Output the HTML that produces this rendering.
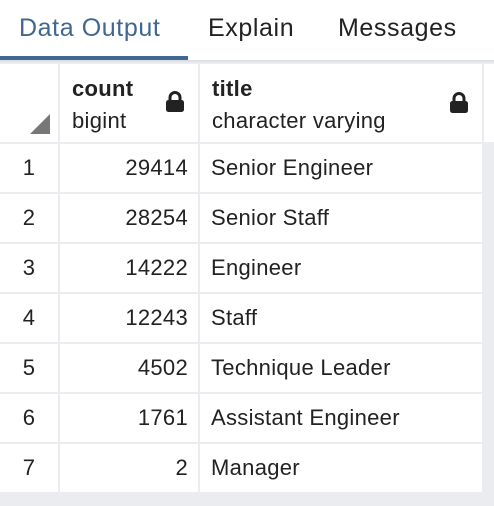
<!DOCTYPE html>
<html><head><style>
body{margin:0;width:494px;height:506px;background:#ebecef;font-family:"Liberation Sans",Arial,sans-serif;position:relative;overflow:hidden}
.tabs{position:absolute;left:0;top:0;width:494px;height:62px;background:#fff;border-bottom:2px solid #dde0e6;box-sizing:border-box}
.tab{position:absolute;top:14px;font-size:25px;letter-spacing:0.6px;color:#222}
.ul{position:absolute;left:0;top:56px;width:188px;height:4px;background:#3f6790}
.c{position:absolute;background:#fff;box-sizing:border-box;font-size:22px;letter-spacing:0.3px;color:#222}
.n{text-align:center}
.r{text-align:right;padding-right:10px}
.t{padding-left:11px}
.lock{position:absolute;width:20px;height:22px}
</style></head><body>
<div class="tabs">
<div class="tab" style="left:19px;color:#3f6790">Data Output</div>
<div class="tab" style="left:208px">Explain</div>
<div class="tab" style="left:338px">Messages</div>
<div class="ul"></div>
</div>
<div class="c" style="left:0;top:64px;width:58px;height:78px"><div style="position:absolute;left:30px;top:50px;width:0;height:0;border-left:20px solid transparent;border-bottom:20px solid #777"></div></div>
<div class="c" style="left:60px;top:64px;width:138px;height:78px"><div style="position:absolute;left:12px;top:12px;font-weight:bold">count</div><div style="position:absolute;left:12px;top:44px">bigint</div>
<svg class="lock" style="left:105px;top:27px" viewBox="0 0 20 22"><path d="M5 10V6.5a5 5 0 0 1 10 0V10" fill="none" stroke="#222" stroke-width="3"/><rect x="1" y="9" width="18" height="12" rx="2.5" fill="#222"/></svg></div>
<div class="c" style="left:200px;top:64px;width:282px;height:78px"><div style="position:absolute;left:12px;top:12px;font-weight:bold">title</div><div style="position:absolute;left:12px;top:44px">character varying</div>
<svg class="lock" style="left:249px;top:28px" viewBox="0 0 20 22"><path d="M5 10V6.5a5 5 0 0 1 10 0V10" fill="none" stroke="#222" stroke-width="3"/><rect x="1" y="9" width="18" height="12" rx="2.5" fill="#222"/></svg></div>
<div style="position:absolute;left:484px;top:64px;width:10px;height:78px;background:#fff"></div>
<div id="rows"></div>
<script>
var d=[["29414","Senior Engineer"],["28254","Senior Staff"],["14222","Engineer"],["12243","Staff"],["4502","Technique Leader"],["1761","Assistant Engineer"],["2","Manager"]];
var h="";
d.forEach(function(r,i){var y=144+i*50;
h+='<div class="c n" style="left:0;top:'+y+'px;width:58px;height:48px;line-height:48px">'+(i+1)+'</div>';
h+='<div class="c r" style="left:60px;top:'+y+'px;width:138px;height:48px;line-height:48px">'+r[0]+'</div>';
h+='<div class="c t" style="left:200px;top:'+y+'px;width:282px;height:48px;line-height:48px">'+r[1]+'</div>';});
document.getElementById("rows").innerHTML=h;
</script>
</body></html>
